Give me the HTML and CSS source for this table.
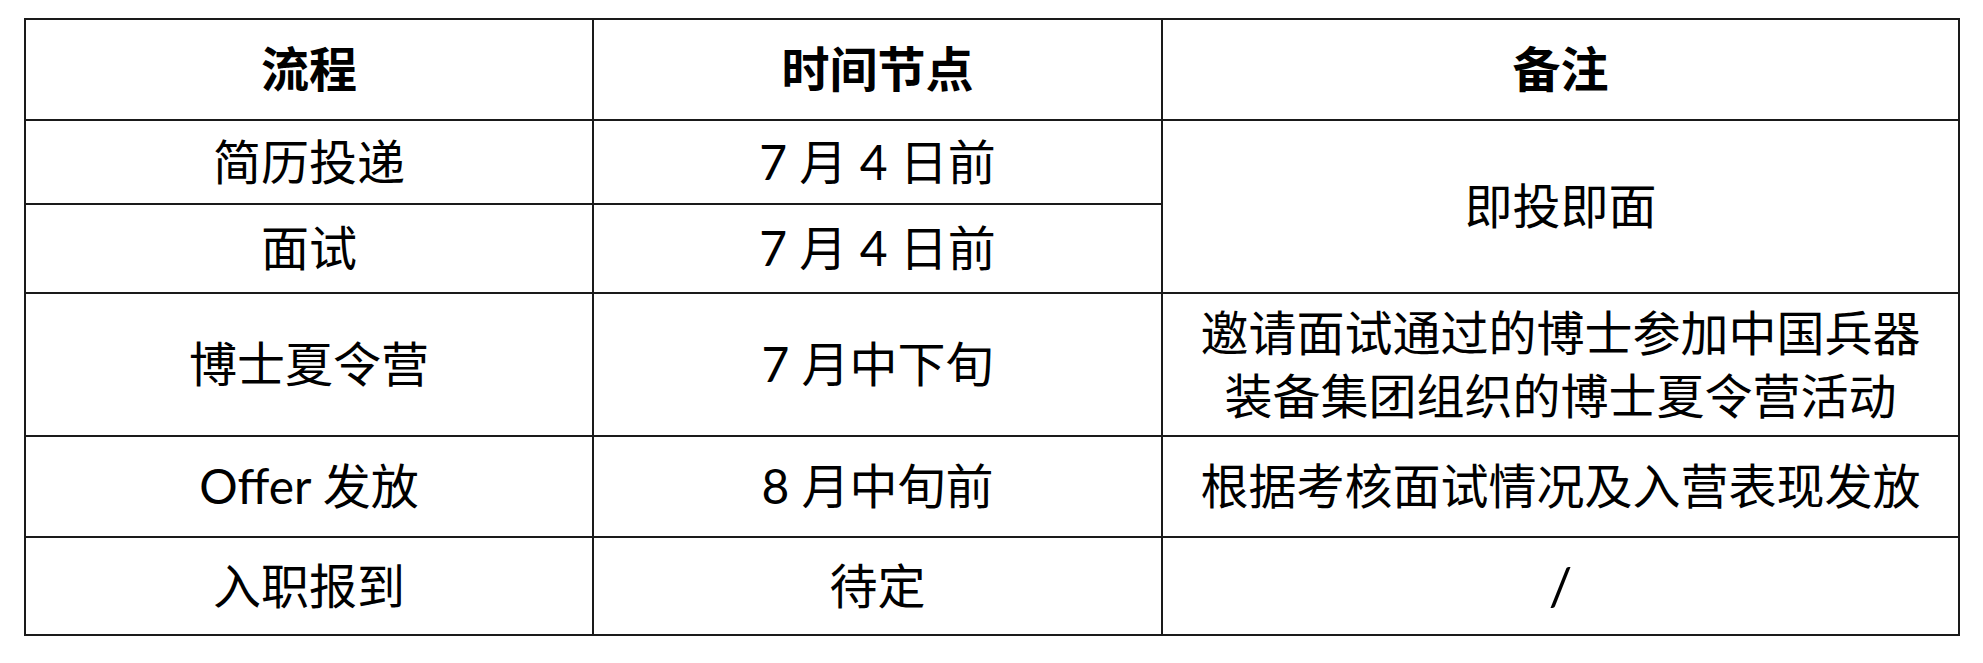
FILE: index.html
```html
<!DOCTYPE html>
<html lang="zh-CN">
<head>
<meta charset="utf-8">
<title>招聘流程</title>
<link rel="stylesheet" href="styles.css">
</head>
<body>
<div class="page">
  <table class="schedule">
    <colgroup>
      <col class="c1">
      <col class="c2">
      <col class="c3">
    </colgroup>
    <thead>
      <tr class="r-head">
        <th>流程</th>
        <th>时间节点</th>
        <th>备注</th>
      </tr>
    </thead>
    <tbody>
      <tr class="r1">
        <td>简历投递</td>
        <td>7 月 4 日前</td>
        <td rowspan="2">即投即面</td>
      </tr>
      <tr class="r2">
        <td>面试</td>
        <td>7 月 4 日前</td>
      </tr>
      <tr class="r3">
        <td>博士夏令营</td>
        <td>7 月中下旬</td>
        <td class="multi">邀请面试通过的博士参加中国兵器<br>装备集团组织的博士夏令营活动</td>
      </tr>
      <tr class="r4">
        <td>Offer 发放</td>
        <td>8 月中旬前</td>
        <td>根据考核面试情况及入营表现发放</td>
      </tr>
      <tr class="r5">
        <td>入职报到</td>
        <td>待定</td>
        <td class="slash">/</td>
      </tr>
    </tbody>
  </table>
</div>
</body>
</html>
```

FILE: styles.css
```css
html, body {
  margin: 0;
  padding: 0;
  background: #ffffff;
}

.page {
  padding: 18px 0 0 24px;
}

.schedule {
  border-collapse: collapse;
  width: 1934px;
  table-layout: fixed;
  font-family: "Lato", "Noto Sans CJK SC", sans-serif;
  font-size: 48px;
  color: #000;
}

.c1 { width: 568px; }
.c2 { width: 569px; }
.c3 { width: 797px; }

.schedule th,
.schedule td {
  border: 2px solid #1a1a1a;
  text-align: center;
  vertical-align: middle;
  padding: 0;
  line-height: 1.3;
}

.schedule th {
  font-weight: 700;
}

.schedule td {
  font-weight: 400;
}

.schedule td.slash {
  font-size: 52px;
}

.r-head { height: 101px; }
.r1 { height: 84px; }
.r2 { height: 89px; }
.r3 { height: 143px; }
.r4 { height: 101px; }
.r5 { height: 98px; }
```
